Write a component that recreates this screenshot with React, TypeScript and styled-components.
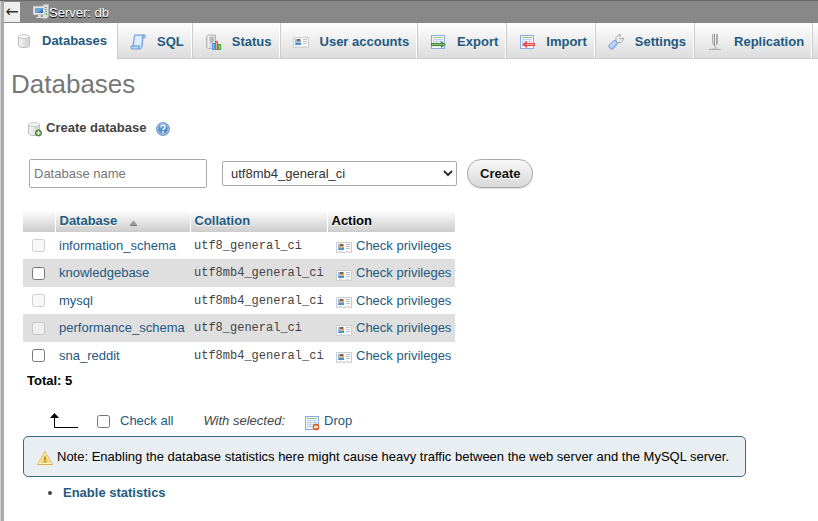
import React from "react";
import styled, { createGlobalStyle } from "styled-components";

const GlobalStyle = createGlobalStyle`
  * { box-sizing: border-box; }
  body {
    margin: 0;
    background: #fff;
    color: #444;
    font: 13px/18px "Liberation Sans", Arial, sans-serif;
  }
  a { color: #235a81; text-decoration: none; }
  a:hover { text-decoration: underline; }
  svg { display: block; flex: none; }
`;

const Page = styled.div`
  display: flex;
  min-height: 100vh;
  border-top: 1px solid #666;
`;

const Resizer = styled.div`
  flex: none;
  width: 4px;
  background: #aaa;
  border-left: 1px solid #d0d0d0;
`;

const Main = styled.main`
  flex: 1;
  min-width: 0;
`;

const ServerBar = styled.header`
  display: flex;
  align-items: center;
  height: 22px;
  background: #888;
`;

const CollapseButton = styled.button`
  width: 16px;
  height: 20px;
  margin-right: 13px;
  padding: 0;
  border: 0;
  background: #eee;
  color: #333;
  font: 16px/20px "DejaVu Sans", sans-serif;
`;

const ServerLink = styled.a`
  && { color: #fff; }
  display: flex;
  align-items: center;
  padding-top: 1px;
  text-shadow: 0 1px 0 #000;
  svg { margin-bottom: 2px; }
`;

const Tabs = styled.nav`
  display: flex;
  height: 36px;
  overflow: hidden;
`;

const Tab = styled.a<{ $active?: boolean }>`
  display: flex;
  flex: none;
  align-items: center;
  gap: ${(p) => (p.$active ? "10px" : "11px")};
  padding: ${(p) => (p.$active ? "0 10px 0 12px" : "2px 8px 0 12px")};
  font-weight: bold;
  white-space: nowrap;
  background: ${(p) => (p.$active ? "#fff" : "linear-gradient(#fff, #dcdcdc)")};
  border: solid #ccc;
  border-width: ${(p) => (p.$active ? "0" : "0 0 1px 1px")};
  box-shadow: ${(p) => (p.$active ? "none" : "inset -1px 0 #fff")};
`;

const TabRemainder = styled.div`
  flex: 1;
  background: linear-gradient(#fff, #dcdcdc);
  border: solid #ccc;
  border-width: 0 0 1px 1px;
`;

const Title = styled.h1`
  margin: 10px 0 20px 7px;
  font-size: 26px;
  line-height: 30px;
  font-weight: normal;
  color: #777;
`;

const Content = styled.div`
  padding: 0 19px;
`;

const CreateLabel = styled.div`
  display: flex;
  align-items: center;
  gap: 3px;
  height: 18px;
  padding-left: 4px;
  font-weight: bold;
  svg { margin-top: 2px; }
`;

const HelpLink = styled.a`
  margin-left: 6px;
`;

const CreateForm = styled.form`
  display: flex;
  align-items: center;
  margin: 22px 0;
  padding-left: 6px;
`;

const NameInput = styled.input`
  width: 178px;
  height: 29px;
  margin-right: 15px;
  padding: 0 4px;
  border: 1px solid #aaa;
  border-radius: 2px;
  color: #444;
  font: inherit;
  &::placeholder { color: #777; }
`;

const CollationSelect = styled.select`
  width: 235px;
  height: 25px;
  margin-right: 10px;
  padding: 0 4px;
  border: 1px solid #aaa;
  border-radius: 2px;
  background: #fff;
  color: #333;
  font: inherit;
`;

const CreateButton = styled.button`
  height: 29px;
  padding: 0 12px;
  border: 1px solid #aaa;
  border-radius: 14px;
  background: linear-gradient(#f8f8f8, #d8d8d8);
  box-shadow: 0 1px 1px #ddd;
  color: #111;
  font: inherit;
  font-weight: bold;
  text-shadow: 0 1px 0 #fff;
`;

const Table = styled.table`
  width: 432px;
  border-collapse: collapse;
  table-layout: fixed;
`;

const HeadCell = styled.th<{ $width?: number }>`
  width: ${(p) => (p.$width ? `${p.$width}px` : "auto")};
  height: 22px;
  padding: 0 4px;
  background: linear-gradient(#fff, #ccc);
  border-left: 1px solid #fff;
  color: #000;
  text-align: left;
  text-shadow: 0 1px 0 #fff;
  &:first-child { border-left: 0; }
`;

const SortLink = styled.a`
  display: flex;
  align-items: center;
  gap: 12px;
  svg { margin-top: 4px; }
`;

const Row = styled.tr`
  height: 27px;
  &:nth-child(even) { height: 28px; background: #dfdfdf; }
`;

const Cell = styled.td`
  padding: 0 4px;
  white-space: nowrap;
`;

const CheckCell = styled(Cell)`
  padding: 0 9px;
`;

const CollationCell = styled(Cell)`
  font: 12px/18px "Liberation Mono", monospace;
`;

const Check = styled.input`
  display: block;
  width: 13px;
  height: 13px;
  margin: 0;
`;

const PrivilegeLink = styled.a`
  display: flex;
  align-items: center;
  gap: 4px;
  padding-left: 5px;
  svg { margin-top: 3px; }
`;

const Total = styled.div`
  padding: 3px 4px 1px;
  color: #000;
  font-weight: bold;
`;

const BulkBar = styled.div`
  display: flex;
  align-items: center;
  height: 20px;
  margin: 20px 0 5px;
  padding-left: 27px;
`;

const CheckAll = styled.label`
  display: flex;
  align-items: center;
  gap: 10px;
  margin: 0 30px 0 19px;
  color: #235a81;
`;

const DropButton = styled.button`
  display: flex;
  align-items: center;
  gap: 4px;
  margin-left: 19px;
  padding: 0;
  border: 0;
  background: none;
  color: #235a81;
  font: inherit;
  svg { margin-top: 3px; }
`;

const Notice = styled.div`
  display: flex;
  align-items: center;
  gap: 4px;
  width: fit-content;
  min-height: 41px;
  padding: 0 16px 0 13px;
  border: 1px solid #3a6c7e;
  border-radius: 5px;
  background: #e8eef1;
  color: #000;
  svg { margin-top: 3px; }
`;

const Links = styled.ul`
  margin: 7px 0 0;
  padding-left: 40px;
  font-weight: bold;
`;

const Icon = ({ children }: { children: React.ReactNode }) => (
  <svg width="16" height="16" viewBox="0 0 16 16" fill="none" aria-hidden="true">
    {children}
  </svg>
);

const Cylinder = () => (
  <>
    <path d="M2.500 3.500v9c0 1.200 2.400 2 5.500 2s5.500-.8 5.500-2v-9" fill="#e2e2e2" stroke="#bbb" />
    <path d="M4 5.500v7.800M6 6v8" stroke="#fafafa" />
    <path d="M10 6v8M12 5.500v7.800" stroke="#ccc" />
    <ellipse cx="8" cy="3.500" rx="5.500" ry="2" fill="#f4f4f4" stroke="#c8c8c8" />
  </>
);

const DatabaseIcon = () => <Icon><Cylinder /></Icon>;

const NewDatabaseIcon = () => (
  <Icon>
    <g transform="translate(-1 0)"><Cylinder /></g>
    <circle cx="11.500" cy="12" r="3" fill="#5fa63e" stroke="#3c7e24" />
    <path d="M11.500 10v4M9.500 12h4" stroke="#fff" strokeWidth="1.200" />
  </Icon>
);

const ServerIcon = () => (
  <Icon>
    <path d="M9.500 1.500l2-1h4v12l-2 2h-4z" fill="#ddd" stroke="#b5b5b5" />
    <path d="M11 3.500h3M11 5.500h3M11 7.500h3" stroke="#999" />
    <rect x="13" y="9" width="1" height="2" fill="#4a3" />
    <rect x=".5" y="2.500" width="11" height="8" fill="#e6e6e6" stroke="#ccc" />
    <rect x="2" y="4" width="8" height="5" fill="#3f78b8" />
    <path d="M2 4h8L5 9H2z" fill="#6da4dc" />
    <path d="M5 11h3v2h2v1H3v-1h2z" fill="#ddd" />
  </Icon>
);

const SqlIcon = () => (
  <Icon>
    <path d="M4.500 1h10c1.400.2 1.400 3-.3 3h-1.200L12 12.500c-.2 1.200-.8 2.500-2.200 2.500H2C.3 15 .3 12 2 12h1z" fill="#b9d9f9" stroke="#6c9bd4" />
    <path d="M5.500 2h6.500l-1.500 9.500H4.200z" fill="#dceeff" />
    <path d="M14.500 1c-1.600 0-2 1.500-2 3M2 12h7.500c-.8 1-.8 2 0 3" stroke="#5f8fcb" />
  </Icon>
);

const StatusIcon = () => (
  <Icon>
    <path d="M1.500 2.500l2-1.500h7v12l-1 1.500h-6l-2-1z" fill="#dcdcdc" stroke="#b5b5b5" />
    <path d="M3.500 2v12" stroke="#eee" />
    <path d="M5 4h4M5 6h4M5 8h3" stroke="#999" />
    <rect x="7.500" y="9.500" width="2" height="6" fill="#8cc7ff" stroke="#4c92e6" />
    <rect x="10.500" y="7.500" width="2" height="8" fill="#ff9b76" stroke="#e85b35" />
    <rect x="13.500" y="10.500" width="2" height="5" fill="#7ce269" stroke="#42ad32" />
  </Icon>
);

const UserIcon = () => (
  <Icon>
    <path d="M.5 3.500h15v10h-3v-1h-2v1h-5v-1h-2v1h-3z" fill="#fafafa" stroke="#ccc" />
    <rect x="2" y="5" width="6" height="6" fill="#83bdf2" />
    <rect x="4" y="5" width="3" height="2" fill="#80613f" />
    <rect x="4" y="7" width="3" height="2" fill="#e0aa72" />
    <path d="M3 9h5v2H2v-1h1z" fill="#4d91d1" />
    <path d="M10 5.500h4M10 7.500h4M10 9.500h4" stroke="#b3c3d4" />
  </Icon>
);

const Sheet = () => (
  <>
    <rect x="1.500" y="1.500" width="13" height="13" fill="#f8fbff" stroke="#87aae1" />
    <path d="M3 3.500h10" stroke="#91c37a" />
    <path d="M3 5.500h10M3 7.500h10M3 9.500h10M3 11.500h10M3.500 5v8M6.500 5v8M10.500 5v8" stroke="#bed1ee" />
  </>
);

const ExportIcon = () => (
  <Icon>
    <Sheet />
    <path d="M1 9h10V7l5 3.500-5 3.500v-2H1z" fill="#438b38" />
    <path d="M2 10.500h12" stroke="#91c479" />
  </Icon>
);

const ImportIcon = () => (
  <Icon>
    <Sheet />
    <path d="M16 9H8V7l-5 3.500L8 14v-2h8z" fill="#ed4649" />
    <path d="M7 10.500h8" stroke="#ffaaa3" />
  </Icon>
);

const SettingsIcon = () => (
  <Icon>
    <path d="M8 7.500V3.500L10.500.8H13l-1.500 2.700.8 1.500 3-1v2l-2.500 2.500H9.500z" fill="#ededed" stroke="#a7a7a7" />
    <path d="M1.500 10.500L7 6l3 3-4.500 5.500c-2 2-6-1-4-4z" fill="#a9c7f5" stroke="#769bdc" />
    <path d="M2.500 12L7 8" stroke="#d6e7ff" strokeWidth="1.500" />
  </Icon>
);

const ReplicationIcon = () => (
  <Icon>
    <path d="M5.500 0v9l2 3V0M9.500 0v11l1-2V0" fill="#e6e6e6" stroke="#aaa" />
    <path d="M7.500 0v12" stroke="#909090" />
    <path d="M8.500 12v3M2 15.500h12" stroke="#aaa" />
    <path d="M5 14.500h6" stroke="#ccc" />
  </Icon>
);

const HelpIcon = () => (
  <Icon>
    <circle cx="8" cy="8" r="6.500" fill="#5a8fc9" stroke="#7fa6d2" />
    <circle cx="8" cy="8" r="5.300" stroke="#c6dbf1" strokeWidth=".8" />
    <path d="M6 6.500c0-3 4-2.600 4-.4 0 1.500-2 1.400-2 3" stroke="#fff" strokeWidth="1.500" />
    <circle cx="8" cy="11.200" r="1" fill="#fff" />
  </Icon>
);

const DropIcon = () => (
  <Icon>
    <Sheet />
    <circle cx="12" cy="12" r="3" fill="#f17b32" stroke="#cf5a21" />
    <path d="M10 12h4" stroke="#fff" strokeWidth="1.500" />
  </Icon>
);

const WarningIcon = () => (
  <Icon>
    <path d="M8 1.500L15.500 14.500H.5z" fill="#fff8d5" stroke="#e0ad55" strokeLinejoin="round" />
    <path d="M8 4l5 9H3z" fill="#f4d35c" />
    <path d="M8 6.500v4M8 11v1.500" stroke="#a78337" strokeWidth="1.500" />
  </Icon>
);

const SortIcon = () => (
  <svg width="9" height="6" viewBox="0 0 9 6" aria-label="Ascending">
    <path d="M4.500 .5L8.500 5.500H.5z" fill="#999" />
    <path d="M1 5.500h7" stroke="#777" />
  </svg>
);

const SelectArrow = () => (
  <svg width="28" height="16" viewBox="0 0 28 16" fill="none" aria-hidden="true">
    <path d="M4.500 4v10.500H28" stroke="#000" />
    <path d="M4.500 0L9 5H0z" fill="#000" />
  </svg>
);

const tabs = [
  { label: "Databases", icon: DatabaseIcon, active: true },
  { label: "SQL", icon: SqlIcon },
  { label: "Status", icon: StatusIcon },
  { label: "User accounts", icon: UserIcon },
  { label: "Export", icon: ExportIcon },
  { label: "Import", icon: ImportIcon },
  { label: "Settings", icon: SettingsIcon },
  { label: "Replication", icon: ReplicationIcon },
];

const databases = [
  { name: "information_schema", collation: "utf8_general_ci", system: true },
  { name: "knowledgebase", collation: "utf8mb4_general_ci", system: false },
  { name: "mysql", collation: "utf8mb4_general_ci", system: true },
  { name: "performance_schema", collation: "utf8_general_ci", system: true },
  { name: "sna_reddit", collation: "utf8mb4_general_ci", system: false },
];

export default function App() {
  return (
    <>
      <GlobalStyle />
      <Page>
        <Resizer />
        <Main>
          <ServerBar>
            <CollapseButton type="button" aria-label="Hide panel">←</CollapseButton>
            <ServerLink href="#server"><ServerIcon />Server: db</ServerLink>
          </ServerBar>
          <Tabs>
            {tabs.map(({ label, icon: TabIcon, active }) => (
              <Tab key={label} href="#" $active={active}><TabIcon />{label}</Tab>
            ))}
            <TabRemainder />
          </Tabs>
          <Title>Databases</Title>
          <Content>
            <CreateLabel>
              <NewDatabaseIcon />
              <label htmlFor="db-name">Create database</label>
              <HelpLink href="#help" aria-label="Documentation"><HelpIcon /></HelpLink>
            </CreateLabel>
            <CreateForm onSubmit={(e) => e.preventDefault()}>
              <NameInput id="db-name" placeholder="Database name" />
              <CollationSelect aria-label="Collation" defaultValue="utf8mb4_general_ci">
                <option>utf8mb4_general_ci</option>
                <option>utf8_general_ci</option>
              </CollationSelect>
              <CreateButton type="submit">Create</CreateButton>
            </CreateForm>
            <Table>
              <thead>
                <tr>
                  <HeadCell $width={32} />
                  <HeadCell $width={135}><SortLink href="#name">Database <SortIcon /></SortLink></HeadCell>
                  <HeadCell $width={137}><a href="#collation">Collation</a></HeadCell>
                  <HeadCell>Action</HeadCell>
                </tr>
              </thead>
              <tbody>
                {databases.map((db) => (
                  <Row key={db.name}>
                    <CheckCell><Check type="checkbox" aria-label={db.name} disabled={db.system} /></CheckCell>
                    <Cell><a href="#database">{db.name}</a></Cell>
                    <CollationCell>{db.collation}</CollationCell>
                    <Cell><PrivilegeLink href="#privileges"><UserIcon />Check privileges</PrivilegeLink></Cell>
                  </Row>
                ))}
              </tbody>
            </Table>
            <Total>Total: {databases.length}</Total>
            <BulkBar>
              <SelectArrow />
              <CheckAll><Check type="checkbox" />Check all</CheckAll>
              <em>With selected:</em>
              <DropButton type="button"><DropIcon />Drop</DropButton>
            </BulkBar>
            <Notice>
              <WarningIcon />
              Note: Enabling the database statistics here might cause heavy traffic between the web server and the MySQL server.
            </Notice>
            <Links>
              <li><a href="#statistics">Enable statistics</a></li>
            </Links>
          </Content>
        </Main>
      </Page>
    </>
  );
}
